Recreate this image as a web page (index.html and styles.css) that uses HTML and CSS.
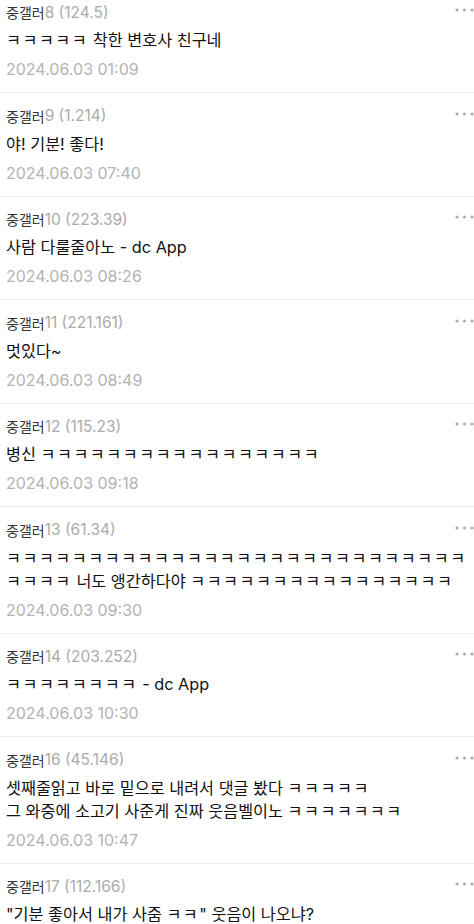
FILE: index.html
```html
<!DOCTYPE html>
<html lang="ko">
  <head>
    <meta charset="utf-8" />
    <title>댓글</title>
    <link rel="stylesheet" href="styles.css">
  </head>
  <body>
    <ul class="comment-list">
      <li class="comment">
        <div class="comment-head">
          <span class="nick">중갤러</span><span class="ip">8 (124.5)</span>
          <svg class="more" width="20" height="6" viewBox="0 0 20 6"><circle cx="3" cy="3" r="1.6"/><circle cx="10.5" cy="3" r="1.6"/><circle cx="18" cy="3" r="1.6"/></svg>
        </div>
        <p class="text"><span class="kk">ㅋㅋㅋㅋㅋ</span> 착한 변호사 친구네</p>
        <div class="date">2024.06.03 01:09</div>
      </li>
      <li class="comment">
        <div class="comment-head">
          <span class="nick">중갤러</span><span class="ip">9 (1.214)</span>
          <svg class="more" width="20" height="6" viewBox="0 0 20 6"><circle cx="3" cy="3" r="1.6"/><circle cx="10.5" cy="3" r="1.6"/><circle cx="18" cy="3" r="1.6"/></svg>
        </div>
        <p class="text">야! 기분! 좋다!</p>
        <div class="date">2024.06.03 07:40</div>
      </li>
      <li class="comment">
        <div class="comment-head">
          <span class="nick">중갤러</span><span class="ip">10 (223.39)</span>
          <svg class="more" width="20" height="6" viewBox="0 0 20 6"><circle cx="3" cy="3" r="1.6"/><circle cx="10.5" cy="3" r="1.6"/><circle cx="18" cy="3" r="1.6"/></svg>
        </div>
        <p class="text">사람 다룰줄아노 - dc App</p>
        <div class="date">2024.06.03 08:26</div>
      </li>
      <li class="comment">
        <div class="comment-head">
          <span class="nick">중갤러</span><span class="ip">11 (221.161)</span>
          <svg class="more" width="20" height="6" viewBox="0 0 20 6"><circle cx="3" cy="3" r="1.6"/><circle cx="10.5" cy="3" r="1.6"/><circle cx="18" cy="3" r="1.6"/></svg>
        </div>
        <p class="text">멋있다~</p>
        <div class="date">2024.06.03 08:49</div>
      </li>
      <li class="comment">
        <div class="comment-head">
          <span class="nick">중갤러</span><span class="ip">12 (115.23)</span>
          <svg class="more" width="20" height="6" viewBox="0 0 20 6"><circle cx="3" cy="3" r="1.6"/><circle cx="10.5" cy="3" r="1.6"/><circle cx="18" cy="3" r="1.6"/></svg>
        </div>
        <p class="text">병신 <span class="kk">ㅋㅋㅋㅋㅋㅋㅋㅋㅋㅋㅋㅋㅋㅋㅋㅋㅋ</span></p>
        <div class="date">2024.06.03 09:18</div>
      </li>
      <li class="comment">
        <div class="comment-head">
          <span class="nick">중갤러</span><span class="ip">13 (61.34)</span>
          <svg class="more" width="20" height="6" viewBox="0 0 20 6"><circle cx="3" cy="3" r="1.6"/><circle cx="10.5" cy="3" r="1.6"/><circle cx="18" cy="3" r="1.6"/></svg>
        </div>
        <p class="text nowrap"><span class="kk">ㅋㅋㅋㅋㅋㅋㅋㅋㅋㅋㅋㅋㅋㅋㅋㅋㅋㅋㅋㅋㅋㅋㅋㅋㅋㅋㅋㅋ</span><br /><span class="kk">ㅋㅋㅋㅋ</span> 너도 앵간하다야 <span class="kk">ㅋㅋㅋㅋㅋㅋㅋㅋㅋㅋㅋㅋㅋㅋㅋㅋ</span></p>
        <div class="date">2024.06.03 09:30</div>
      </li>
      <li class="comment">
        <div class="comment-head">
          <span class="nick">중갤러</span><span class="ip">14 (203.252)</span>
          <svg class="more" width="20" height="6" viewBox="0 0 20 6"><circle cx="3" cy="3" r="1.6"/><circle cx="10.5" cy="3" r="1.6"/><circle cx="18" cy="3" r="1.6"/></svg>
        </div>
        <p class="text"><span class="kk">ㅋㅋㅋㅋㅋㅋㅋㅋ</span> - dc App</p>
        <div class="date">2024.06.03 10:30</div>
      </li>
      <li class="comment">
        <div class="comment-head">
          <span class="nick">중갤러</span><span class="ip">16 (45.146)</span>
          <svg class="more" width="20" height="6" viewBox="0 0 20 6"><circle cx="3" cy="3" r="1.6"/><circle cx="10.5" cy="3" r="1.6"/><circle cx="18" cy="3" r="1.6"/></svg>
        </div>
        <p class="text">셋째줄읽고 바로 밑으로 내려서 댓글 봤다 <span class="kk">ㅋㅋㅋㅋㅋ</span><br />그 와중에 소고기 사준게 진짜 웃음벨이노 <span class="kk">ㅋㅋㅋㅋㅋㅋㅋ</span></p>
        <div class="date">2024.06.03 10:47</div>
      </li>
      <li class="comment">
        <div class="comment-head">
          <span class="nick">중갤러</span><span class="ip">17 (112.166)</span>
          <svg class="more" width="20" height="6" viewBox="0 0 20 6"><circle cx="3" cy="3" r="1.6"/><circle cx="10.5" cy="3" r="1.6"/><circle cx="18" cy="3" r="1.6"/></svg>
        </div>
        <p class="text">"기분 좋아서 내가 사줌 <span class="kk">ㅋㅋ</span>" 웃음이 나오냐?</p>
        <div class="date">2024.06.03 10:52</div>
      </li>
    </ul>
  </body>
</html>
```

FILE: styles.css
```css
body {
  margin: 0;
  padding: 0;
  background-color: #fff;
  font-family: Inter, "Noto Sans CJK KR", sans-serif;
  overflow: hidden;
}

.comment-list {
  list-style-type: none;
  margin: -10.5px 0 0 0;
  padding: 0;
}

.comment {
  padding: 12.5px 0 11px 6px;
  border-bottom: 1px solid #ededed;
}

.comment-head {
  display: flex;
  align-items: center;
  height: 20px;
}

.nick {
  font-size: 14px;
  color: #333;
}

.ip {
  font-size: 15.5px;
  color: #ababab;
}

.more {
  margin-left: auto;
  align-self: flex-start;
  margin-top: 5px;
  fill: #acacac;
}

.text {
  margin: 7px 0 0 0;
  font-size: 16.25px;
  line-height: 23px;
  color: #111;
}

.nowrap {
  white-space: nowrap;
}

/* ㅋ runs are narrower than the other syllables in this font */
.kk {
  letter-spacing: 1.5px;
}

.date {
  margin-top: 5px;
  font-size: 16px;
  line-height: 24px;
  color: #b3b3b3;
}
```
